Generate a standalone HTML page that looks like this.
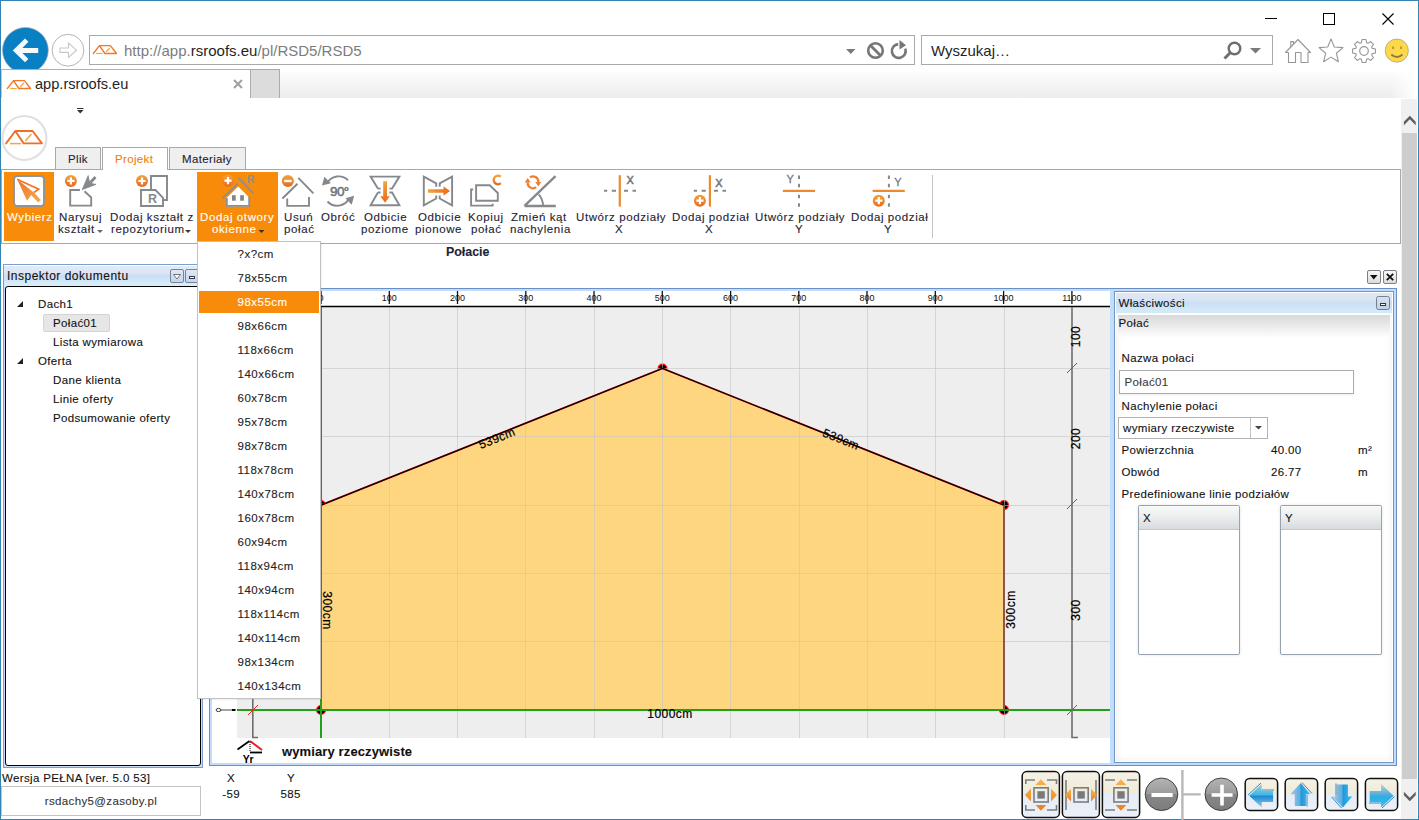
<!DOCTYPE html>
<html><head><meta charset="utf-8">
<style>
*{margin:0;padding:0;box-sizing:border-box}
html,body{width:1419px;height:820px;overflow:hidden;background:#fff;font-family:"Liberation Sans",sans-serif;color:#000}
.a{position:absolute}
.t{position:absolute;white-space:nowrap;line-height:1}
svg{position:absolute;overflow:visible}
.t{-webkit-text-stroke:0.1px currentColor}
.nb{-webkit-text-stroke:0}
</style></head><body>
<!-- window frame -->
<div class="a" style="left:0;top:0;width:1419px;height:1px;background:#3385b5"></div>
<div class="a" style="left:0;top:0;width:1px;height:820px;background:#3385b5"></div>
<div class="a" style="left:1418px;top:0;width:1px;height:820px;background:#3385b5"></div>
<div class="a" style="left:0;top:819px;width:1419px;height:1px;background:#3385b5"></div>

<!-- window controls -->
<div class="a" style="left:1265px;top:18px;width:12px;height:1px;background:#000"></div>
<div class="a" style="left:1323px;top:13px;width:12px;height:12px;border:1px solid #000"></div>
<svg style="left:1382px;top:13px" width="12" height="12"><path d="M0.5 0.5L11.5 11.5M11.5 0.5L0.5 11.5" stroke="#000" stroke-width="1.1"/></svg>

<!-- back / forward -->
<svg style="left:0;top:25px" width="90" height="45">
 <defs><clipPath id="cb"><rect x="0" y="0" width="90" height="44"/></clipPath></defs>
 <circle cx="25.4" cy="25.3" r="22.9" fill="#0a80c4" stroke="#b8aca0" stroke-width="0.7" clip-path="url(#cb)"/>
 <path d="M12.8 25.4L25 13.4L28.4 16.8L22.4 22.9H38.2V27.9H22.4L28.4 33.9L25 37.3Z" fill="#f5f9fc"/>
 <circle cx="68" cy="25.2" r="15.9" fill="#fff" stroke="#b4b4b4" stroke-width="1"/>
 <path d="M60 23H68.5V18L76.5 25.2L68.5 32.4V27.4H60Z" fill="none" stroke="#c8c8c8" stroke-width="1.1" stroke-linejoin="miter"/>
</svg>
<!-- address box -->
<div class="a" style="left:89px;top:35px;width:826px;height:30px;border:1px solid #a9a9a9;background:#fff"></div>
<svg style="left:90px;top:40px" width="30" height="16"><path d="M3.4 13.5L9.5 5.6H20.4L26.5 13.5H14.9L9.5 5.6" fill="none" stroke="#f07a28" stroke-width="1.4" stroke-linejoin="round" stroke-linecap="round"/><path d="M6.1 13.5H12.7" stroke="#f7a838" stroke-width="1.2"/><path d="M16.4 11.5L19.6 8.3" stroke="#f7a838" stroke-width="1.3" stroke-linecap="round"/></svg>
<div class="t nb" style="left:124px;top:43px;font-size:15px;color:#7c7c7c">http://app.<span style="color:#1f1f1f">rsroofs.eu</span>/pl/RSD5/RSD5</div>
<svg style="left:846px;top:49px" width="11" height="6"><path d="M0 0H9.5L4.75 5Z" fill="#7a7a7a"/></svg>
<svg style="left:866px;top:41px" width="20" height="20"><circle cx="9.5" cy="9.5" r="7.3" fill="none" stroke="#767676" stroke-width="2.6"/><path d="M4.3 4.3L14.7 14.7" stroke="#767676" stroke-width="2.8"/></svg>
<svg style="left:889px;top:39px" width="20" height="22"><path d="M9.20 5.13A6.9 6.9 0 1 0 16.28 9.64" fill="none" stroke="#767676" stroke-width="2.6"/><path d="M10.5 1L17 6.2L10.5 10.5Z" fill="#767676"/></svg>

<!-- search box -->
<div class="a" style="left:921px;top:35px;width:352px;height:30px;border:1px solid #a9a9a9;background:#fff"></div>
<div class="t nb" style="left:931px;top:43px;font-size:15px;color:#1f1f1f">Wyszukaj…</div>
<svg style="left:1222px;top:40px" width="22" height="22"><circle cx="12.5" cy="8.5" r="5.8" fill="none" stroke="#6e6e6e" stroke-width="2.4"/><path d="M8.2 12.8L2.5 18.5" stroke="#6e6e6e" stroke-width="3"/></svg>
<svg style="left:1250px;top:48px" width="12" height="6"><path d="M0 0H11L5.5 5.5Z" fill="#7a7a7a"/></svg>

<!-- toolbar icons -->
<svg style="left:1284px;top:38px" width="28" height="26"><path d="M1.5 14.5L14 1.5L26.5 14.5H24V24.5H17V14.5H11.5V24.5H4.5V14.5Z" fill="#fff" stroke="#979797" stroke-width="1.1" stroke-linejoin="round"/><path d="M6.8 9.3V3.6H9.4V6.6" fill="none" stroke="#979797" stroke-width="1.1"/></svg>
<svg style="left:1318px;top:38px" width="26" height="26"><path d="M13.00 0.90L16.29 8.97L24.98 9.61L18.33 15.23L20.41 23.69L13.00 19.10L5.59 23.69L7.67 15.23L1.02 9.61L9.71 8.97Z" fill="#fff" stroke="#979797" stroke-width="1.1" stroke-linejoin="round"/></svg>
<svg style="left:1351px;top:38px" width="26" height="26"><path d="M21.19 10.38L24.43 11.04L24.43 14.96L21.19 15.62L20.65 16.94L22.47 19.70L19.70 22.47L16.94 20.65L15.62 21.19L14.96 24.43L11.04 24.43L10.38 21.19L9.06 20.65L6.30 22.47L3.53 19.70L5.35 16.94L4.81 15.62L1.57 14.96L1.57 11.04L4.81 10.38L5.35 9.06L3.53 6.30L6.30 3.53L9.06 5.35L10.38 4.81L11.04 1.57L14.96 1.57L15.62 4.81L16.94 5.35L19.70 3.53L22.47 6.30L20.65 9.06Z" fill="#fff" stroke="#979797" stroke-width="1.1" stroke-linejoin="round"/><circle cx="13" cy="13" r="4.3" fill="none" stroke="#979797" stroke-width="1.2"/></svg>
<svg style="left:1384px;top:38px" width="26" height="26"><circle cx="12.8" cy="12.6" r="11.6" fill="#fdd84a" stroke="#a09a80" stroke-width="0.7"/><path d="M9.1 8.5V11M17 8.5V11" stroke="#8a7a3a" stroke-width="1.3"/><path d="M7.3 16.5Q12.9 21.5 18.5 16.5" fill="none" stroke="#8a7a3a" stroke-width="1.8"/></svg>

<!-- tab row -->
<div class="a" style="left:280px;top:70px;width:1138px;height:28px;background:linear-gradient(#ffffff,#f6f6f6 40%,#ededed)"></div>
<div class="a" style="left:1390px;top:70px;width:28px;height:28px;background:linear-gradient(90deg,rgba(255,255,255,0),#fff 90%)"></div>
<div class="a" style="left:1px;top:69px;width:279px;height:1px;background:#b0b0b0"></div>
<div class="a" style="left:1px;top:69px;width:1px;height:29px;background:#c8c8c8"></div>
<div class="a" style="left:250px;top:69px;width:30px;height:29px;background:#dcdcdc;border:1px solid #ababab;border-bottom:none"></div>
<svg style="left:3.5px;top:74.6px" width="30" height="16"><path d="M3.4 13.5L9.5 5.6H20.4L26.5 13.5H14.9L9.5 5.6" fill="none" stroke="#f07a28" stroke-width="1.4" stroke-linejoin="round" stroke-linecap="round"/><path d="M6.1 13.5H12.7" stroke="#f7a838" stroke-width="1.2"/><path d="M16.4 11.5L19.6 8.3" stroke="#f7a838" stroke-width="1.3" stroke-linecap="round"/></svg>
<div class="t nb" style="left:35px;top:77px;font-size:14.6px;color:#1f1f1f">app.rsroofs.eu</div>
<svg style="left:233px;top:79px" width="10" height="10"><path d="M1 1L9 9M9 1L1 9" stroke="#a0a0a0" stroke-width="2"/></svg>

<!--APP-->
<div class="a" style="left:1px;top:98px;width:1400px;height:721px;background:#fff"></div>
<svg style="left:77px;top:108px" width="7" height="6"><path d="M0 0.5H6.5" stroke="#333" stroke-width="1"/><path d="M0 2H6.5L3.25 5.5Z" fill="#333"/></svg>
<!-- logo -->
<svg style="left:0;top:113px" width="50" height="50"><circle cx="24.4" cy="25" r="22" fill="#fff" stroke="#e0e0e0" stroke-width="2.2"/>
<path d="M6.1 30.4L15.3 18H32.6L41.9 30.4H23.7L15.3 18" fill="none" stroke="#ea7228" stroke-width="1.9" stroke-linejoin="round" stroke-linecap="round"/><path d="M9.9 30.6H21.2" stroke="#f6a63a" stroke-width="1.5"/><path d="M25.7 27.5L31.1 21.5" stroke="#f6a63a" stroke-width="1.6" stroke-linecap="round"/></svg>
<!-- tabs -->
<div class="a" style="left:55px;top:147px;width:46px;height:23px;background:#efefef;border:1px solid #a8a8a8;border-bottom:none"></div>
<div class="a" style="left:102px;top:147px;width:66px;height:23px;background:#fff;border:1px solid #a8a8a8;border-bottom:none;z-index:2"></div>
<div class="a" style="left:169px;top:147px;width:77px;height:23px;background:#efefef;border:1px solid #a8a8a8;border-bottom:none"></div>
<div class="t" style="left:68px;top:154.1px;font-size:11.5px;letter-spacing:0.35px;color:#1e2235">Plik</div>
<div class="t" style="left:115px;top:154.1px;font-size:11.5px;letter-spacing:0.35px;color:#f07d12;z-index:3">Projekt</div>
<div class="t" style="left:182px;top:154.1px;font-size:11.5px;letter-spacing:0.35px;color:#1e2235">Materiały</div>
<!-- ribbon -->
<div class="a" style="left:1px;top:169px;width:1400px;height:75px;border:1px solid #a8a8a8;background:#fff"></div>
<div class="a" style="left:103px;top:169px;width:64px;height:1px;background:#fff;z-index:2"></div>
<div class="a" style="left:4px;top:172px;width:50px;height:69px;background:#f88c0a"></div>
<div class="a" style="left:197px;top:172px;width:81px;height:69px;background:#f88c0a"></div>
<div class="a" style="left:932px;top:175px;width:1px;height:63px;background:#c4c4c4"></div>
<div id="rib" style="position:absolute;left:0;top:0.42px;font-size:11.5px;letter-spacing:0.6px;color:#1e2235;">
<div class="t" style="left:7px;top:212px;color:#fff">Wybierz</div>
<div class="t" style="left:59px;top:212px">Narysuj</div>
<div class="t" style="left:58px;top:224px">kształt</div>
<div class="t" style="left:110px;top:212px">Dodaj kształt z</div>
<div class="t" style="left:111px;top:224px">repozytorium</div>
<div class="t" style="left:200px;top:212px;color:#fff">Dodaj otwory</div>
<div class="t" style="left:212px;top:224px;color:#fff">okienne</div>
<div class="t" style="left:284px;top:212px">Usuń</div>
<div class="t" style="left:284px;top:224px">połać</div>
<div class="t" style="left:321px;top:212px">Obróć</div>
<div class="t" style="left:364px;top:212px">Odbicie</div>
<div class="t" style="left:361px;top:224px">poziome</div>
<div class="t" style="left:418px;top:212px">Odbicie</div>
<div class="t" style="left:415px;top:224px">pionowe</div>
<div class="t" style="left:468px;top:212px">Kopiuj</div>
<div class="t" style="left:471px;top:224px">połać</div>
<div class="t" style="left:511px;top:212px">Zmień kąt</div>
<div class="t" style="left:510px;top:224px">nachylenia</div>
<div class="t" style="left:576px;top:212px">Utwórz podziały</div>
<div class="t" style="left:615px;top:224px">X</div>
<div class="t" style="left:672px;top:212px">Dodaj podział</div>
<div class="t" style="left:705px;top:224px">X</div>
<div class="t" style="left:755px;top:212px">Utwórz podziały</div>
<div class="t" style="left:795px;top:224px">Y</div>
<div class="t" style="left:851px;top:212px">Dodaj podział</div>
<div class="t" style="left:884px;top:224px">Y</div>
</div>
<svg style="left:0;top:0" width="1" height="1">
<path d="M97 230H103L100 233Z" fill="#6a6a6a"/>
<path d="M185 230H191L188 233Z" fill="#3a3a3a"/>
<path d="M258.5 230H264.5L261.5 233Z" fill="#333"/>
</svg>
<!-- ribbon icons -->
<svg style="left:0;top:0" width="1" height="1">
<defs>
<linearGradient id="og" x1="0" y1="0" x2="0" y2="1"><stop offset="0" stop-color="#f4a23c"/><stop offset="1" stop-color="#e96a1c"/></linearGradient>
<linearGradient id="og2r" x1="0" y1="0" x2="1" y2="0"><stop offset="0" stroke-color="#e96a1c" stop-color="#e96a1c"/><stop offset="1" stop-color="#f7a63c"/></linearGradient>
<linearGradient id="og2" x1="0" y1="0" x2="1" y2="0"><stop offset="0" stop-color="#f4a23c"/><stop offset="1" stop-color="#e96a1c"/></linearGradient>
<g id="plus"><circle r="6" fill="url(#og)"/><path d="M-3.6 0H3.6M0 -3.6V3.6" stroke="#fff" stroke-width="2.2"/></g>
<g id="minus"><circle r="6" fill="url(#og)"/><path d="M-3.8 0H3.8" stroke="#fff" stroke-width="2.4"/></g>
</defs>
<g fill="none" stroke="#85888c" stroke-width="1.9">
<!-- Wybierz -->
<rect x="14" y="176" width="30" height="30" rx="3.5" fill="#fff" stroke="#8e949a" stroke-width="1.9"/>
<defs><linearGradient id="wg" x1="0" y1="0" x2="1" y2="1"><stop offset="0" stop-color="#ec7424"/><stop offset="1" stop-color="#f5aa50"/></linearGradient></defs>
<path d="M17.2 179.2L27 200.7L31.2 195L38.2 202.6L40.9 199.9L33.8 192.5Z" fill="url(#wg)" stroke="none"/>
<path d="M17.2 179.2L38.7 189.2L33.8 192.5" stroke="#ee7628" stroke-width="1.7" stroke-linejoin="miter"/>
<!-- Narysuj -->
<path d="M80 190H70.2V205.6H91.2V197.5L84.5 191.2"/>
<path d="M82.3 189.5L88.2 175.6L89.6 183.2Z M82.3 189.5L96 184.4L89.6 183.2Z" fill="#85888c" stroke-width="0.8"/>
<path d="M89.5 183.5L95.5 177" stroke-width="2.8"/>
<!-- Dodaj ksztalt -->
<path d="M151 189V176H167V200H163.2"/>
<path d="M141 190H155.5L163 197.8V206H141Z" fill="#fff"/>
<text x="148" y="202.8" font-family="Liberation Sans" font-weight="bold" font-size="12.5" fill="#85888c" stroke="none">R</text>
<!-- Dodaj otwory -->
<path d="M226 198.5L238.2 186.5L250 198.2V206.2H226Z" fill="#fff" stroke="none"/>
<path d="M222.4 198.5L237.8 183.8M238.6 177.8L253.5 193.3M226.8 198V205.9H249.2V196.5" stroke="#8b9096"/>
<rect x="232" y="195.2" width="3.7" height="5.5" fill="#808488" stroke="none"/>
<rect x="240.2" y="195.2" width="3.7" height="5.5" fill="#808488" stroke="none"/>
<text x="246.8" y="183" font-family="Liberation Sans" font-weight="bold" font-size="10.5" fill="#8b9096" stroke="none">R</text>
<!-- Usun -->
<path d="M282.4 198.5L297.5 183.7M298.3 177.8L313.4 193.3M287.2 198.5V205.9H309V197"/>
<!-- Obroc -->
<path d="M348 180.2A13.2 13.2 0 0 0 327 183.5"/>
<path d="M322 185.6L324.4 176.8L330.8 183.2Z" fill="#85888c" stroke="none"/>
<path d="M327.5 201.5A13.2 13.2 0 0 0 349 198.5"/>
<path d="M354.2 195.8L351.7 204.8L345.5 198.2Z" fill="#85888c" stroke="none"/>
<text x="330" y="196.3" font-family="Liberation Sans" font-size="13.5" fill="#707276" stroke="#707276" stroke-width="0.5" letter-spacing="-0.6">90°</text>
<!-- Odbicie poziome -->
<path d="M377.9 188.6L370.6 176.6H399.4L392.1 188.6H389.4M380.6 188.6H377.9"/>
<path d="M377.9 192.5L370.6 205.3H399.4L392.1 192.5H389.4M380.6 192.5H377.9"/>
<path d="M383.2 181.2H387V196.3H389.8L385.1 202.7L380.3 196.3H383.2Z" fill="url(#og)" stroke="none"/>
<!-- Odbicie pionowe -->
<path d="M436.2 186.8V183.3L423.8 176.6V205.4L436.2 198.5V195.5"/>
<path d="M439.7 186.8V183.3L452.1 176.6V205.4L439.7 198.5V195.5"/>
<path d="M428 189.3H443.5V186.2L450 191L443.5 195.7V192.8H428Z" fill="url(#og2)" stroke="none"/>
<!-- Kopiuj -->
<path d="M476.1 185.2H489.7L497.8 193V200.8H476.1Z"/>
<path d="M473.2 189.5H471.1V205.6H492.7V203.8"/>
<path d="M500.8 176.6A4.3 4.3 0 1 0 500.8 183.2" stroke="url(#og)" stroke-width="2.4"/>
<!-- Zmien kat -->
<path d="M524.5 205.8L555.5 176.2M524.5 206H555.8" stroke-width="2.3"/>
<path d="M538.7 194.4Q542.8 199 543.2 206"/>
<path d="M530 177.3A5.3 5.3 0 0 1 538.3 182M536.2 187.2A5.3 5.3 0 0 1 527.7 182.5" stroke="#ee8030" stroke-width="2.2"/>
<path d="M535.3 182L541.3 182L538.3 186.6Z M524.7 182.5L530.7 182.5L527.7 177.9Z" fill="#ee8030" stroke="none"/>
<!-- Utworz X -->
<path d="M619.8 175.2V206.6" stroke="#ee8a2e" stroke-width="2.2"/>
<path d="M604 190.8H607.2M611.8 190.8H616M624 190.8H628M632.5 190.8H636" stroke="#85888c" stroke-width="2"/>
<text x="626.5" y="184" font-family="Liberation Sans" font-size="11" fill="#75787c" stroke="#75787c" stroke-width="0.5">X</text>
<!-- Dodaj X -->
<path d="M709.9 175.2V206.6" stroke="#ee8a2e" stroke-width="2.2"/>
<path d="M693.8 190.8H697M701.6 190.8H705.8M714 190.8H718M722.5 190.8H726" stroke="#85888c" stroke-width="2"/>
<text x="715.3" y="187" font-family="Liberation Sans" font-size="11" fill="#75787c" stroke="#75787c" stroke-width="0.5">X</text>
<!-- Utworz Y -->
<path d="M782.9 190.8H815" stroke="#ee8a2e" stroke-width="2.2"/>
<path d="M799 175.4V178.9M799 183.8V187.3M799 194.8V198.3M799 203.2V206.7" stroke="#85888c" stroke-width="2"/>
<text x="786.6" y="183" font-family="Liberation Sans" font-size="11" fill="#75787c" stroke="#75787c" stroke-width="0.3">Y</text>
<!-- Dodaj Y -->
<path d="M872.6 190.8H904.8" stroke="#ee8a2e" stroke-width="2.2"/>
<path d="M888.9 175.4V178.9M888.9 183.8V187.3M888.9 194.8V198.3M888.9 203.2V206.7" stroke="#85888c" stroke-width="2"/>
<text x="894.2" y="186" font-family="Liberation Sans" font-size="11" fill="#75787c" stroke="#75787c" stroke-width="0.3">Y</text>
</g>
<use href="#plus" x="70.9" y="180.9"/>
<use href="#plus" x="142" y="181"/>
<use href="#plus" x="228" y="180.7"/>
<use href="#minus" x="287.9" y="181"/>
<use href="#plus" x="699.9" y="200.7"/>
<use href="#plus" x="878.8" y="200.7"/>
</svg>
<div class="t" style="left:446px;top:246px;font-size:12.4px;font-weight:bold;color:#1e2235">Połacie</div>


<!-- left panel -->
<div class="a" style="left:3px;top:264px;width:200px;height:504px;border:1px solid #7c9fcf;background:#c9ddf5"></div>
<div class="a" style="left:4px;top:265px;width:198px;height:21px;border-top:1px solid #fff;background:linear-gradient(#e2eaf5,#dbe5f3 35%,#cadef4 50%,#d2e8f8 75%,#d8f0fb)"></div>
<div class="t" style="left:7px;top:270.3px;font-size:12px;letter-spacing:0.5px;color:#111">Inspektor dokumentu</div>
<div class="a" style="left:170px;top:269px;width:14px;height:14px;border:1px solid #7a8496;border-radius:2px;background:linear-gradient(#dfe9f5,#c5d6ea)"></div>
<svg style="left:173px;top:274px" width="9" height="6"><path d="M0.5 0.5H7.5L4 5Z" fill="#fff" stroke="#666" stroke-width="0.9"/></svg>
<div class="a" style="left:185px;top:269px;width:14px;height:14px;border:1px solid #7a8496;border-radius:2px;background:linear-gradient(#dfe9f5,#c5d6ea)"></div>
<div class="a" style="left:189px;top:276px;width:6px;height:3px;border:1px solid #3a3a4a;background:#fff"></div>
<div class="a" style="left:5px;top:286px;width:196px;height:480px;border:1.5px solid #000;border-radius:3px;background:#fff"></div>
<svg style="left:0;top:0" width="1" height="1"><path d="M17 307H23V301Z M17 364H23V358Z" fill="#222"/></svg>
<div class="a" style="left:43px;top:314px;width:67px;height:18px;background:#e6e6e6;border:1px solid #d4d4d4;border-radius:2px"></div>
<div style="position:absolute;left:0;top:0.59px;font-size:11.5px;letter-spacing:0.35px;color:#111">
<div class="t" style="left:38px;top:298px">Dach1</div>
<div class="t" style="left:53px;top:317px">Połać01</div>
<div class="t" style="left:53px;top:336px">Lista wymiarowa</div>
<div class="t" style="left:38px;top:355px">Oferta</div>
<div class="t" style="left:53px;top:374px">Dane klienta</div>
<div class="t" style="left:53px;top:393px">Linie oferty</div>
<div class="t" style="left:53px;top:412px">Podsumowanie oferty</div>
</div>

<!-- big frame -->
<div class="a" style="left:209px;top:288px;width:1188px;height:478px;border:1px solid #6b8fc5;background:#c2dcfb"></div>
<div class="a" style="left:212px;top:291px;width:898px;height:472px;background:#fff"></div>
<!-- canvas -->
<svg style="left:0;top:0" width="1" height="1" font-family="Liberation Sans">
<rect x="237" y="307" width="873" height="431" fill="#eeeeee"/>
<g fill="#000" stroke="#ff1010" stroke-width="1.2">
<circle cx="321" cy="505.1" r="4.4"/><circle cx="662.5" cy="368.5" r="4.4"/><circle cx="1004" cy="505.1" r="4.4"/><circle cx="1004" cy="710" r="4.4"/><circle cx="321" cy="710" r="4.4"/>
</g>
<path d="M321 710V505.1L662.5 368.5L1004 505.1V710Z" fill="#ffd680"/>
<g stroke="#c4c4c4" stroke-opacity="0.6" stroke-width="1">
<path d="M389.5 307V738M457.5 307V738M525.5 307V738M594.5 307V738M662.5 307V738M730.5 307V738M799.5 307V738M867.5 307V738M935.5 307V738M1004.5 307V738M252.5 307V738"/>
<path d="M237 368.5H1110M237 436.5H1110M237 505.5H1110M237 573.5H1110M237 641.5H1110"/>
</g>
<path d="M237 306.5H1110" stroke="#000" stroke-width="1.6"/>
<g font-size="9" fill="#111" text-anchor="middle">
<text x="321" y="301.2">0</text><text x="389.3" y="301.2">100</text><text x="457.5" y="301.2">200</text><text x="525.8" y="301.2">300</text><text x="594" y="301.2">400</text><text x="662.3" y="301.2">500</text><text x="730.6" y="301.2">600</text><text x="798.8" y="301.2">700</text><text x="867" y="301.2">800</text><text x="935.3" y="301.2">900</text><text x="1003.6" y="301.2">1000</text><text x="1071.9" y="301.2">1100</text>
</g>
<path d="M321 291V304M389.3 291V304M457.5 291V304M525.8 291V304M594 291V304M662.3 291V304M730.6 291V304M798.8 291V304M867 291V304M935.3 291V304M1003.6 291V304M1071.9 291V304" stroke="#111" stroke-width="1.3"/>
<!-- roof edges -->
<path d="M321 505.1L662.5 368.5L1004 505.1" fill="none" stroke="#ff2020" stroke-width="1.8"/>
<path d="M321 505.1L662.5 368.5L1004 505.1" fill="none" stroke="#000" stroke-width="1.3"/>
<path d="M1004 505.1V710" stroke="#84524a" stroke-width="1.9"/>
<path d="M237 710H1110" stroke="#22a01a" stroke-width="2"/>
<path d="M321 307V738" stroke="#22a01a" stroke-width="2"/>
<!-- right dimension -->
<path d="M1072 307V737.5H1078" fill="none" stroke="#6e6e6e" stroke-width="1.6"/>
<path d="M252.8 698V737.5H258" fill="none" stroke="#6e6e6e" stroke-width="1.6"/>
<path d="M1067 373L1077 363M1067 509L1077 499M1067 715L1077 705M248 715L258 705" stroke="#ff2020" stroke-width="1"/>
<path d="M221 710H233" stroke="#666" stroke-width="1.2"/><path d="M232 709H235.5V711H232Z" fill="#000"/>
<ellipse cx="218.5" cy="710" rx="2.4" ry="1.6" fill="#fff" stroke="#222" stroke-width="0.9"/>
<g font-size="12" fill="#000" stroke="#000" stroke-width="0.2" text-anchor="middle" letter-spacing="0.45">
<text transform="translate(1080,336.5) rotate(-90)">100</text>
<text transform="translate(1080,438.5) rotate(-90)">200</text>
<text transform="translate(1080,610) rotate(-90)">300</text>
<text transform="translate(322.6,610.5) rotate(90)">300cm</text>
<text transform="translate(1014.6,609.5) rotate(-90)">300cm</text>
<text x="670" y="717.5">1000cm</text>
<text transform="translate(498.5,442) rotate(-21.8)">539cm</text>
<text transform="translate(839.5,443) rotate(21.8)">539cm</text>
</g>
</svg>
<!-- status under canvas -->
<svg style="left:236px;top:740px" width="30" height="25"><path d="M1.5 9.5L13.5 1" fill="none" stroke="#000" stroke-width="1.8"/><path d="M14 1L26 10" stroke="#e82020" stroke-width="2"/><path d="M14 2V12" stroke="#000" stroke-width="1" stroke-dasharray="1 1"/><path d="M14 12.5H26" stroke="#000" stroke-width="1.8"/><text x="6.8" y="23" font-family="Liberation Sans" font-weight="bold" font-size="10.5" fill="#000" letter-spacing="-0.3">Yr</text></svg>
<div class="t" style="left:282px;top:745px;font-size:13px;letter-spacing:0.12px;font-weight:bold;color:#111">wymiary rzeczywiste</div>

<!-- properties panel -->
<div class="a" style="left:1114px;top:291px;width:280px;height:472px;border:1px solid #7096c2;background:#fff"></div>
<div class="a" style="left:1115px;top:292px;width:278px;height:470px;border:1px solid #fff;background:#fff;box-shadow:inset 5px 0 6px -4px rgba(0,0,0,0.07),inset -5px -5px 7px -4px rgba(0,0,0,0.05)"></div>
<div class="a" style="left:1116px;top:293px;width:276px;height:20px;background:linear-gradient(#e0e7f3,#d9e4f3 35%,#cadef4 50%,#d0e6f6 75%,#d4ebf7)"></div>
<div class="t" style="left:1118.5px;top:297.9px;font-size:11.5px;letter-spacing:0.35px;color:#111">Właściwości</div>
<div class="a" style="left:1376px;top:296px;width:14px;height:14px;border:1px solid #767e8c;border-radius:2.5px;background:linear-gradient(#d8e2ef,#bfd2e8)"></div>
<div class="a" style="left:1380px;top:303px;width:6px;height:3px;border:1px solid #333;background:#fff"></div>
<div class="a" style="left:1118px;top:315px;width:272px;height:23px;background:linear-gradient(#d9d9d9,#ebebeb 50%,#fff)"></div>
<div style="position:absolute;left:0;top:1.42px;font-size:11.5px;letter-spacing:0.35px;color:#111">
<div class="t" style="left:1118.5px;top:317px">Połać</div>
<div class="t" style="left:1121.5px;top:351.3px">Nazwa połaci</div>
<div class="t" style="left:1121.5px;top:399.8px">Nachylenie połaci</div>
<div class="t" style="left:1121.5px;top:443.2px">Powierzchnia</div>
<div class="t" style="left:1271px;top:443.2px">40.00</div>
<div class="t" style="left:1358px;top:443.2px">m²</div>
<div class="t" style="left:1121.5px;top:465.4px">Obwód</div>
<div class="t" style="left:1271px;top:465.4px">26.77</div>
<div class="t" style="left:1358px;top:465.4px">m</div>
<div class="t" style="left:1121.5px;top:487.6px">Predefiniowane linie podziałów</div>
</div>
<div class="a" style="left:1119px;top:370px;width:235px;height:23.5px;border:1px solid #ababab;background:#fff;box-shadow:0 1px 2px rgba(0,0,0,0.08)"></div>
<div class="t" style="left:1124.5px;top:376.6px;font-size:11.5px;letter-spacing:0.35px;color:#3c3c3c">Połać01</div>
<div class="a" style="left:1118px;top:417px;width:150px;height:21.5px;border:1px solid #b4b4b4;background:#fff"></div>
<div class="a" style="left:1250px;top:418px;width:1px;height:19.5px;background:#c4c4c4"></div>
<div class="t" style="left:1123px;top:423.1px;font-size:11.5px;letter-spacing:0.35px;color:#111">wymiary rzeczywiste</div>
<svg style="left:1255px;top:426px" width="8" height="4"><path d="M0 0H7L3.5 3.5Z" fill="#444"/></svg>
<div class="a" style="left:1138px;top:505px;width:101.5px;height:149.5px;border:1px solid #97a3b0;border-radius:2px;background:#fff;box-shadow:0 0 3px rgba(0,0,0,.12)"></div>
<div class="a" style="left:1139px;top:506px;width:99.5px;height:24px;background:linear-gradient(#f8f9f9,#eceeef 45%,#d8dcdf);border-bottom:1px solid #c4c8cc"></div>
<div class="t" style="left:1143px;top:513px;font-size:11.5px;letter-spacing:0.35px;color:#111">X</div>
<div class="a" style="left:1280px;top:505px;width:101.5px;height:149.5px;border:1px solid #97a3b0;border-radius:2px;background:#fff;box-shadow:0 0 3px rgba(0,0,0,.12)"></div>
<div class="a" style="left:1281px;top:506px;width:99.5px;height:24px;background:linear-gradient(#f8f9f9,#eceeef 45%,#d8dcdf);border-bottom:1px solid #c4c8cc"></div>
<div class="t" style="left:1285px;top:513px;font-size:11.5px;letter-spacing:0.35px;color:#111">Y</div>
<!-- panel header buttons -->
<div class="a" style="left:1367px;top:270px;width:14px;height:14px;border:1px solid #7a7f88;border-radius:2px;background:linear-gradient(#f8f8f8,#dcdcdc)"></div>
<svg style="left:1370px;top:275px" width="8" height="5"><path d="M0 0H7.5L3.75 4.5Z" fill="#111"/></svg>
<div class="a" style="left:1383px;top:270px;width:14px;height:14px;border:1px solid #7a7f88;border-radius:2px;background:linear-gradient(#f8f8f8,#dcdcdc)"></div>
<svg style="left:1386px;top:273px" width="8" height="8"><path d="M0.8 0.8L7.2 7.2M7.2 0.8L0.8 7.2" stroke="#111" stroke-width="1.8"/></svg>

<!-- bottom bar -->
<div class="t" style="left:2px;top:773px;font-size:11.5px;letter-spacing:0.35px;color:#111">Wersja PEŁNA [ver. 5.0 53]</div>
<div class="a" style="left:1px;top:786px;width:200px;height:29.5px;border:1px solid #c4c4c4;background:#fff"></div>
<div class="t" style="left:1px;top:795.6px;width:200px;text-align:center;font-size:11.5px;letter-spacing:0.35px;color:#333">rsdachy5@zasoby.pl</div>
<div class="t" style="left:225px;top:772.92px;width:12px;text-align:center;font-size:11.5px;letter-spacing:0.35px;color:#111">X</div>
<div class="t" style="left:285px;top:772.92px;width:12px;text-align:center;font-size:11.5px;letter-spacing:0.35px;color:#111">Y</div>
<div class="t" style="left:222.3px;top:788.6px;font-size:11.5px;letter-spacing:0.35px;color:#111">-59</div>
<div class="t" style="left:280.6px;top:788.6px;font-size:11.5px;letter-spacing:0.35px;color:#111">585</div>
<svg style="left:0;top:0" width="1" height="1">
<defs>
<linearGradient id="bg" x1="0" y1="0" x2="0" y2="1"><stop offset="0" stop-color="#f5f2e4"/><stop offset="0.5" stop-color="#efebda"/><stop offset="0.5" stop-color="#e6edf7"/><stop offset="1" stop-color="#ebf0f8"/></linearGradient>
<linearGradient id="cg" x1="0" y1="0" x2="0" y2="1"><stop offset="0" stop-color="#b4b4b4"/><stop offset="0.5" stop-color="#9a9a9a"/><stop offset="0.5" stop-color="#888"/><stop offset="1" stop-color="#7c7c7c"/></linearGradient>
<linearGradient id="blu" x1="0" y1="0" x2="0" y2="1"><stop offset="0" stop-color="#8fd0e8"/><stop offset="0.5" stop-color="#3ab0e0"/><stop offset="1" stop-color="#1e8ad8"/></linearGradient>
<linearGradient id="org" x1="0" y1="0" x2="0" y2="1"><stop offset="0" stop-color="#f7b552"/><stop offset="1" stop-color="#ee7c22"/></linearGradient>
</defs>
<g stroke="#111" stroke-width="1.5" fill="url(#bg)">
<rect x="1022.2" y="771.6" width="37.2" height="45.8" rx="4.5"/>
<rect x="1062.4" y="771.6" width="37" height="45.8" rx="4.5"/>
<rect x="1102.4" y="771.6" width="37.2" height="45.8" rx="4.5"/>
<rect x="1245.2" y="778.4" width="32.4" height="32" rx="4.5"/>
<rect x="1285.2" y="778.4" width="32.4" height="32" rx="4.5"/>
<rect x="1325.2" y="778.4" width="32.4" height="32" rx="4.5"/>
<rect x="1365.4" y="778.4" width="32.2" height="32" rx="4.5"/>
</g>
<g fill="none" stroke="#7d7d7d" stroke-width="1.6">
<rect x="1034" y="787.8" width="14.2" height="14.2"/><rect x="1074" y="787.8" width="14.2" height="14.2"/><rect x="1113.9" y="787.8" width="14.2" height="14.2"/>
<path d="M1025.8 784V780H1035M1047 780H1056.5V784M1025.8 805V810H1035M1047 810H1056.5V805"/>
<path d="M1066 780V810M1096 780V810"/>
<path d="M1105 780H1115M1127 780H1137M1105 810H1115M1127 810H1137"/>
</g>
<g fill="#7a7a7a"><rect x="1037.4" y="791.2" width="7.4" height="7.4"/><rect x="1077.4" y="791.2" width="7.4" height="7.4"/><rect x="1117.3" y="791.2" width="7.4" height="7.4"/></g>
<g fill="url(#org)">
<path d="M1035.5 785L1040.9 779.2L1046.3 785Z M1035.5 805L1040.9 810.8L1046.3 805Z M1031 788.5L1025 795L1031 801.5Z M1051 788.5L1057 795L1051 801.5Z"/>
<path d="M1071 788.5L1065 795L1071 801.5Z M1091 788.5L1097 795L1091 801.5Z"/>
<path d="M1115.5 785L1120.9 779.2L1126.3 785Z M1115.5 805L1120.9 810.8L1126.3 805Z"/>
</g>
<circle cx="1161.5" cy="794.3" r="16.3" fill="url(#cg)" stroke="#222" stroke-width="0.8"/>
<circle cx="1221.3" cy="794.3" r="16.3" fill="url(#cg)" stroke="#222" stroke-width="0.8"/>
<path d="M1151.5 795H1172.7" stroke="#fff" stroke-width="4"/>
<path d="M1211.6 795H1232.6M1222 784.8V805.5" stroke="#fff" stroke-width="3.6"/>
<path d="M1182.4 770V820M1182.4 794.4H1200.7" stroke="#b8b8b8" stroke-width="2.4"/>
<defs>
<linearGradient id="bh" x1="0" y1="0" x2="0" y2="1"><stop offset="0" stop-color="#8ad6ea"/><stop offset="0.45" stop-color="#45b8e2"/><stop offset="0.52" stop-color="#1a8ad4"/><stop offset="1" stop-color="#a8c8e6"/></linearGradient>
<linearGradient id="bhr" x1="0" y1="0" x2="0" y2="1"><stop offset="0" stop-color="#b4d4dc"/><stop offset="0.5" stop-color="#4aa8d8"/><stop offset="0.55" stop-color="#2aaee8"/><stop offset="1" stop-color="#30c4f4"/></linearGradient>
<linearGradient id="bv" x1="0" y1="0" x2="1" y2="0"><stop offset="0" stop-color="#a8c6e2"/><stop offset="0.5" stop-color="#5aaee0"/><stop offset="0.52" stop-color="#2096dc"/><stop offset="1" stop-color="#3cc0ee"/></linearGradient>
</defs>
<path d="M1249.2 795.8L1261.7 784.1V790.9H1273.1V802H1261.7V807.5Z" fill="url(#bh)"/>
<path d="M1248 795L1261 783M1262 790H1274" stroke="#2a7ab8" stroke-width="0.9" fill="none"/>
<path d="M1300.8 783.1L1310.3 794.2H1305.9V806.1H1294.8V794.2H1290.3Z" fill="url(#bv)"/>
<path d="M1302 782.5L1312 793.5M1307 795V806.5" stroke="#2a7ab8" stroke-width="0.9" fill="none"/>
<path d="M1342.8 807.5L1352.3 796.4H1347.9V784.5H1336.8V796.4H1332.3Z" fill="url(#bv)"/>
<path d="M1341.5 808L1331.5 797M1336 783.5V796" stroke="#2a7ab8" stroke-width="0.9" fill="none"/>
<path d="M1393.6 795.8L1381.1 784.1V790.9H1369.7V802H1381.1V807.5Z" fill="url(#bhr)"/>
<path d="M1394.6 796.5L1382 808M1381 803H1369" stroke="#2a7ab8" stroke-width="0.9" fill="none"/>

</svg>

<!-- dropdown menu -->
<div class="a" style="left:197px;top:241px;width:124px;height:458px;border:1px solid #c2c2c2;background:#fff;z-index:5;box-shadow:1px 1px 1px rgba(0,0,0,0.05)"></div>
<div class="a" style="left:199px;top:291px;width:120px;height:22px;background:#f88c0a;z-index:5"></div>
<div style="position:absolute;left:0;top:1.5px;font-size:11.5px;letter-spacing:0.5px;color:#222;z-index:6">
<div class="t" style="left:237.5px;top:247.5px">?x?cm</div>
<div class="t" style="left:237.5px;top:271.5px">78x55cm</div>
<div class="t" style="left:237.5px;top:295.5px;color:#fff">98x55cm</div>
<div class="t" style="left:237.5px;top:319.5px">98x66cm</div>
<div class="t" style="left:237.5px;top:343.5px">118x66cm</div>
<div class="t" style="left:237.5px;top:367.5px">140x66cm</div>
<div class="t" style="left:237.5px;top:391.5px">60x78cm</div>
<div class="t" style="left:237.5px;top:415.5px">95x78cm</div>
<div class="t" style="left:237.5px;top:439.5px">98x78cm</div>
<div class="t" style="left:237.5px;top:463.5px">118x78cm</div>
<div class="t" style="left:237.5px;top:487.5px">140x78cm</div>
<div class="t" style="left:237.5px;top:511.5px">160x78cm</div>
<div class="t" style="left:237.5px;top:535.5px">60x94cm</div>
<div class="t" style="left:237.5px;top:559.5px">118x94cm</div>
<div class="t" style="left:237.5px;top:583.5px">140x94cm</div>
<div class="t" style="left:237.5px;top:607.5px">118x114cm</div>
<div class="t" style="left:237.5px;top:631.5px">140x114cm</div>
<div class="t" style="left:237.5px;top:655.5px">98x134cm</div>
<div class="t" style="left:237.5px;top:679.5px">140x134cm</div>
</div>

<!-- scrollbar -->
<div class="a" style="left:1401px;top:99px;width:16px;height:720px;background:#f0f0f0"></div>
<div class="a" style="left:1402px;top:133px;width:15px;height:646px;background:#cdcdcd"></div>
<svg style="left:1403px;top:114px" width="14" height="12"><path d="M0.9 7.8L6.8 1.8L12.7 7.8V11.2L6.8 5.3L0.9 11.2Z" fill="#5e5e5e"/></svg>
<svg style="left:1403px;top:791px" width="14" height="12"><path d="M0.9 4.2L6.8 10.2L12.7 4.2V0.8L6.8 6.7L0.9 0.8Z" fill="#5e5e5e"/></svg>

</body></html>
